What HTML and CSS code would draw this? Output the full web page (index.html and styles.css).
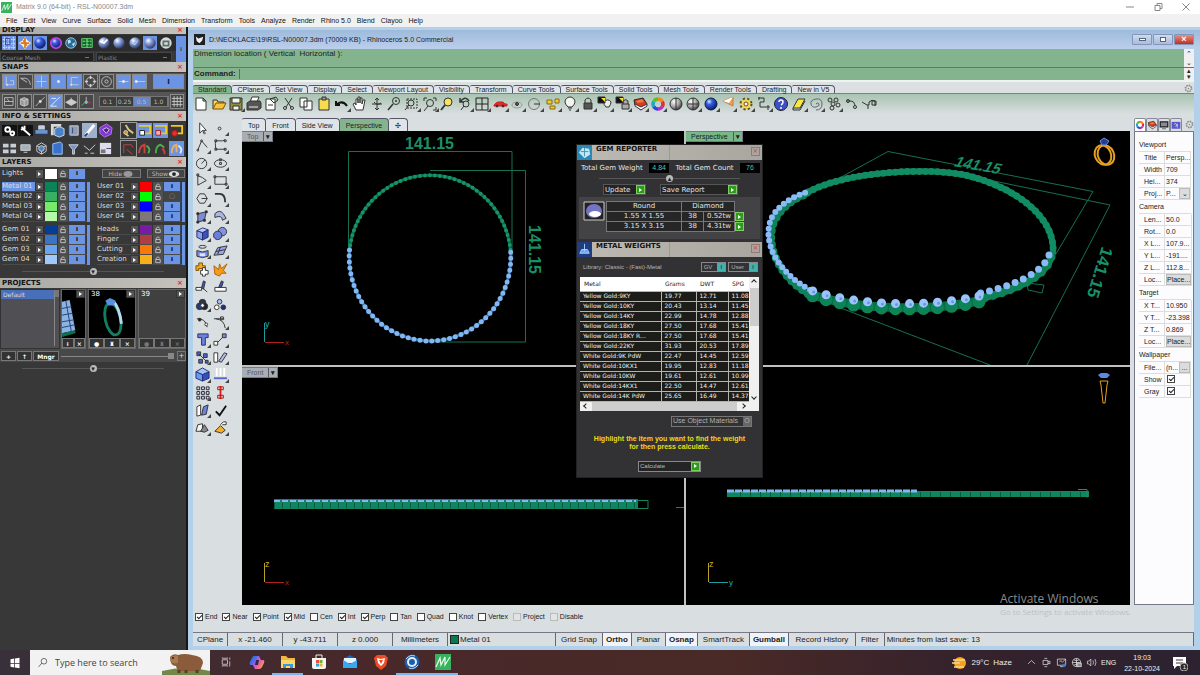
FILE: index.html
```html
<!DOCTYPE html>
<html lang="en">
<head>
<meta charset="utf-8">
<title>Matrix 9.0 (64-bit) - RSL-N00007.3dm</title>
<link rel="stylesheet" href="styles.css">
</head>
<body>
<svg class="defs" aria-hidden="true">
  <defs>
    <radialGradient id="ball" cx=".35" cy=".3" r=".8"><stop offset="0" stop-color="#fff"/><stop offset=".35" stop-color="#8aa0dc"/><stop offset="1" stop-color="#1a2450"/></radialGradient>
    <radialGradient id="bluegl" cx=".35" cy=".3" r=".8"><stop offset="0" stop-color="#dfe8ff"/><stop offset=".3" stop-color="#3a5ee8"/><stop offset="1" stop-color="#05104e"/></radialGradient>
    <radialGradient id="greygl" cx=".35" cy=".3" r=".8"><stop offset="0" stop-color="#fff"/><stop offset=".5" stop-color="#a8a8a8"/><stop offset="1" stop-color="#222"/></radialGradient>
    <linearGradient id="copilot" x2="1" y2=".6"><stop offset="0" stop-color="#2f8df0"/><stop offset=".3" stop-color="#3a6ee8"/><stop offset=".55" stop-color="#b45ce0"/><stop offset=".8" stop-color="#f06a90"/><stop offset="1" stop-color="#f8a050"/></linearGradient>
  </defs>
  <symbol id="lock" viewBox="0 0 10 10"><path d="M3 5V3.500q2-3 4 0M2.500 5h5v3.500h-5z" fill="none" stroke="#c4c4c4"/></symbol>
  <symbol id="gear" viewBox="0 0 16 16"><circle cx="8" cy="8" r="5.500" fill="none" stroke="#888" stroke-width="3" stroke-dasharray="2.300 2"/><circle cx="8" cy="8" r="4.500" fill="#e6e8e8" stroke="#888"/><circle cx="8" cy="8" r="1.500" fill="#888"/></symbol>
  <symbol id="wheel" viewBox="0 0 16 16"><g fill="none" stroke-width="3.500"><path d="M8 3a5 5 0 0 1 4.300 2.500" stroke="#f28a1c"/><path d="M12.300 5.500a5 5 0 0 1 0 5" stroke="#e03030"/><path d="M12.300 10.500A5 5 0 0 1 8 13" stroke="#b030d0"/><path d="M8 13a5 5 0 0 1-4.300-2.500" stroke="#3048e0"/><path d="M3.700 10.500a5 5 0 0 1 0-5" stroke="#20a8c0"/><path d="M3.700 5.500A5 5 0 0 1 8 3" stroke="#58c030"/></g></symbol>
  <symbol id="book" viewBox="0 0 16 16"><path d="M2 4l9-2 4 6-6 6-6-5z" fill="#d83a20" stroke="#222"/><path d="M3 8l6 3 6-3v2l-6 4-6-4z" fill="#fff" stroke="#334"/><path d="M4 5l6-2 2 3-6 1z" fill="#f07838" stroke="none"/></symbol>
  <symbol id="mglyph" viewBox="0 0 16 16"><path d="M0 0h16v16H0z" fill="#38b25c"/><path d="M1 13L5 4l1 7 4-8 0 8 5-8" fill="none" stroke="#e8fff0" stroke-width="1.200"/></symbol>
</svg>

<header class="app-title">
  <svg class="app-logo"><use href="#mglyph"/></svg>
  <span>Matrix 9.0 (64-bit) - RSL-N00007.3dm</span>
  <div class="win-buttons">
    <button aria-label="Minimize"><svg viewBox="0 0 10 10"><path d="M1 5h8"/></svg></button>
    <button aria-label="Restore"><svg viewBox="0 0 10 10"><path d="M2 3.500h5v5H2zM4 3V1.500h5v5H7"/></svg></button>
    <button aria-label="Close"><svg viewBox="0 0 10 10"><path d="M1.500 1.500l7 7M8.500 1.500l-7 7"/></svg></button>
  </div>
</header>
<nav class="menu"><button>File</button><button>Edit</button><button>View</button><button>Curve</button><button>Surface</button><button>Solid</button><button>Mesh</button><button>Dimension</button><button>Transform</button><button>Tools</button><button>Analyze</button><button>Render</button><button>Rhino 5.0</button><button>Blend</button><button>Clayoo</button><button>Help</button></nav>

<div class="main">
<aside class="side">
  <h2 class="bar cut">DISPLAY<button aria-label="Close display">×</button></h2>
  <div class="row disp">
    <button class="on"><svg viewBox="0 0 16 16"><path d="M3 1v14M8 1v14M13 1v14M1 4h14M1 9h14M1 13h14" stroke="#dfe6ff" stroke-dasharray="2 1"/><path d="M4 3h5v7H4z" stroke="#2b3d9c"/></svg></button>
    <button class="on"><svg viewBox="0 0 16 16"><path d="M8 1l3 4 4 3-4 3-3 4-3-4-4-3 4-3z" fill="#fff4d8" stroke="none"/><path d="M8 2v12M3 8h10M6 5l4 6" stroke="#e07818" stroke-width="2"/></svg></button>
    <button class="on"><svg viewBox="0 0 16 16"><circle cx="8" cy="8" r="6.500" fill="url(#bluegl)" stroke="none"/></svg></button>
    <button><svg viewBox="0 0 16 16"><circle cx="8" cy="8" r="6" fill="url(#bluegl)" stroke="#c040e0" stroke-width="2"/></svg></button>
    <button><svg viewBox="0 0 16 16"><circle cx="8" cy="8" r="6" fill="#2a6c9c" stroke="#9cd0e8"/><path d="M4 5l3-1 1 3-3 2zM9 9l4-2-2 5z" fill="#bfe6ee" stroke="none"/></svg></button>
    <button><svg viewBox="0 0 16 16"><path d="M2 3h12v10H2z" fill="#0c6a2c" stroke="#63e070"/><path d="M3 6h10M3 10h10M8 3v10" stroke="#a4f0a0" stroke-dasharray="3 1"/></svg></button>
    <i class="sep"></i>
    <button><svg viewBox="0 0 16 16"><circle cx="8" cy="8" r="6.500" fill="url(#ball)" stroke="none"/><path d="M3 6l5 2 4-4" stroke="#fff" stroke-width="2"/></svg></button>
    <button><svg viewBox="0 0 16 16"><circle cx="8" cy="8" r="6.500" fill="url(#ball)" stroke="none"/></svg></button>
    <button><svg viewBox="0 0 16 16"><circle cx="8" cy="8" r="6.500" fill="url(#ball)" stroke="none"/><path d="M4 8l4 2 3-5" stroke="#cde"/></svg></button>
    <button class="on"><svg viewBox="0 0 16 16"><circle cx="8" cy="8" r="6.500" fill="url(#ball)" stroke="none"/></svg></button>
    <button><svg viewBox="0 0 16 16"><circle cx="8" cy="8" r="6.500" fill="#d4dcdc" stroke="none"/><path d="M5 6h6v5H5z" stroke="#5c7068" stroke-width="2"/></svg></button>
  </div>
  <div class="row combos">
    <select aria-label="Mesh quality"><option>Coarse Mesh</option></select>
    <select aria-label="Material"><option>Plastic</option></select>
  </div>
  <button class="tall" aria-label="Toggle display">ı</button>

  <h2 class="bar">SNAPS<button aria-label="Close snaps">×</button></h2>
  <div class="row tiles">
    <button class="on"><svg viewBox="0 0 16 16"><path d="M4 2v10h9V7H9" /><circle cx="5" cy="12" r="1" fill="#fff"/></svg></button>
    <button><svg viewBox="0 0 16 16"><path d="M2 4h6q5 1 6 8M2 4l8 5"/></svg></button>
    <button class="on"><svg viewBox="0 0 16 16"><path d="M8 1v14M2 8h12"/></svg></button>
    <button class="on"><svg viewBox="0 0 16 16"><circle cx="8" cy="8" r="1.500" fill="#fff"/></svg></button>
    <button class="on"><svg viewBox="0 0 16 16"><path d="M12 3H4v9h9"/><circle cx="4" cy="12" r="1" fill="#fff"/></svg></button>
    <button><svg viewBox="0 0 16 16"><circle cx="8" cy="8" r="5"/><path d="M8 1v4M8 11v4M1 8h4M11 8h4" stroke-width="2"/></svg></button>
    <button><svg viewBox="0 0 16 16"><circle cx="8" cy="8" r="6"/><circle cx="8" cy="8" r="2"/></svg></button>
    <button class="on"><svg viewBox="0 0 16 16"><path d="M2 8h12"/><circle cx="8" cy="8" r="1.500" fill="#fff"/></svg></button>
    <button class="on"><svg viewBox="0 0 16 16"><path d="M3 8h12"/><circle cx="4" cy="8" r="1.500" fill="#fff"/></svg></button>
    <button class="on wide" aria-label="Toggle snaps"><b>I</b></button>
  </div>
  <div class="row tiles second">
    <button><svg viewBox="0 0 16 16"><path d="M2 3h11v10H2zM2 8h11M8 8l-3-4"/></svg></button>
    <button><svg viewBox="0 0 16 16"><path d="M3 5l5-2 5 2v7l-5 2-5-2z" fill="#999"/><path d="M3 5l5 2 5-2M8 7v7"/></svg></button>
    <button><svg viewBox="0 0 16 16"><path d="M2 14L14 2"/><circle cx="8" cy="8" r="1.500" fill="#cfc"/></svg></button>
    <button class="on"><svg viewBox="0 0 16 16"><path d="M2 14L14 2M2 14h8M3 4h6" stroke="#fff"/></svg></button>
    <button><svg viewBox="0 0 16 16"><path d="M1 9l7-4 7 4-7 4z" fill="#ccc"/><path d="M8 3v6"/></svg></button>
    <button><svg viewBox="0 0 16 16"><path d="M8 8V2"/><path d="M8 8l6 2" stroke="#e04040"/><path d="M8 8l-6 5" stroke="#60c060"/><circle cx="8" cy="9" r="1.500" fill="#59f"/></svg></button>
    <div class="steps"><button>0.1</button><button>0.25</button><button class="sel">0.5</button><button>1.0</button></div>
    <button><svg viewBox="0 0 16 16"><path d="M4 1v14M8 1v14M12 1v14M1 4h14M1 8h14M1 12h14" stroke="#d8d8d8"/></svg></button>
  </div>

  <h2 class="bar">INFO &amp; SETTINGS<button aria-label="Close info">×</button></h2>
  <div class="row icons">
    <button><svg viewBox="0 0 16 16"><path d="M0 2h16v12H0z" fill="#111" stroke="none"/><circle cx="6" cy="7" r="2.500" stroke="#fff" stroke-width="2"/><circle cx="11" cy="11" r="2" stroke="#fff" stroke-width="2"/></svg></button>
    <button><svg viewBox="0 0 16 16"><path d="M0 2h16v12H0z" fill="#111" stroke="none"/><path d="M4 4l2 3 7 6M3 7l4-1 0-3" stroke="#fff" stroke-width="2"/></svg></button>
    <button><svg viewBox="0 0 16 16"><path d="M1 7h14v5H1z" fill="#6d94cc" stroke="#234"/><path d="M5 7V3h6v4" fill="#b8d0f0"/></svg></button>
    <button><svg viewBox="0 0 16 16"><path d="M1 1h11v3H4v9H1z" fill="#d8d8d8" stroke="none"/><path d="M5 6l5-2 5 2v7l-5 2-5-2z" fill="#4a80c8" stroke="#cde"/></svg></button>
    <button><svg viewBox="0 0 16 16"><path d="M4 3h9v10H4z" fill="#8d9cb8"/><path d="M3 4v9l3 2M7 5v6" stroke="#334c78"/></svg></button>
    <button><svg viewBox="0 0 16 16"><path d="M0 0h16v16H0z" fill="#9db0cc" stroke="none"/><path d="M4 13l9-11" stroke="#fff" stroke-width="3"/><path d="M3 14l3-3" stroke="#223c7c" stroke-width="2"/></svg></button>
    <button><svg viewBox="0 0 16 16"><path d="M2 5l7-4 6 4-1 7-7 3-5-4z" fill="#8038d0" stroke="#c070f0"/><path d="M5 7l4-2 3 2-3 4z" fill="#4c2090"/></svg></button>
    <i class="sep"></i>
    <button class="frame"><svg viewBox="0 0 16 16"><path d="M5 2l3 5 5 4M3 10l5 4" stroke="#d8c880" stroke-width="2"/><circle cx="5" cy="10" r="2" fill="#d09020"/></svg></button>
    <button class="on"><svg viewBox="0 0 16 16"><path d="M2 3h12v8H9" stroke="#f0c820" stroke-width="2"/><path d="M3 8h5v5H3z" fill="#fff" stroke="#222"/></svg></button>
    <button class="on"><svg viewBox="0 0 16 16"><path d="M2 3h12v8H9" stroke="#f0c820" stroke-width="2"/><path d="M3 8h5v5H3z" fill="#f8b0b0" stroke="#a22"/></svg></button>
    <button><svg viewBox="0 0 16 16"><path d="M2 3h12v8H9" stroke="#f0c820" stroke-width="2"/><circle cx="6" cy="11" r="3" fill="#e03030" stroke="#c01010"/></svg></button>
  </div>
  <div class="row icons last">
    <button><svg viewBox="0 0 16 16"><path d="M1 3h6v4H1zM9 3h6v4H9zM1 9h6v4H1zM9 9h6v4H9z" fill="#c8ced6" stroke="none"/></svg></button>
    <button><svg viewBox="0 0 16 16"><path d="M3 4h10v6H3z" fill="#a4b0bc"/><path d="M6 12h4"/></svg></button>
    <button><svg viewBox="0 0 16 16"><path d="M3 5l5-3 5 3v6l-5 3-5-3zM3 5l5 3 5-3M8 8v6"/><circle cx="8" cy="8" r="3" fill="#48c"/></svg></button>
    <button><svg viewBox="0 0 16 16"><path d="M3 3l8-2 2 2v11H3z" fill="#3c70d0" stroke="#9cf"/></svg></button>
    <button><svg viewBox="0 0 16 16"><path d="M3 4h10l-4 5v5H7V9z" fill="#6c94dc"/></svg></button>
    <button><svg viewBox="0 0 16 16"><path d="M2 5l6 5 6-6M3 13h3M9 13h4"/></svg></button>
    <button><svg viewBox="0 0 16 16"><path d="M2 2h12v12H2z" fill="#dde" stroke="none"/><path d="M3 9h5v4H3z" fill="#777" stroke="none"/><path d="M9 8h5" stroke="#446"/></svg></button>
    <i class="sep"></i>
    <button class="frame"><svg viewBox="0 0 16 16"><path d="M3 13V4h8l2 3M6 9l6 5" stroke="#c04848"/></svg></button>
    <button><svg viewBox="0 0 16 16"><path d="M2 13q1-8 6-9v9" stroke="#d04040" stroke-width="2"/><path d="M10 5q5 3 2 8" stroke="#4cb04c" stroke-width="2"/></svg></button>
    <button><svg viewBox="0 0 16 16"><path d="M3 13q0-8 5-9l4 3" stroke="#4cb04c" stroke-width="2"/><path d="M10 8q3 3 2 6" stroke="#d04040" stroke-width="2"/></svg></button>
    <button class="on"><svg viewBox="0 0 16 16"><path d="M3 13q0-8 5-9v8" stroke="#e8b060" stroke-width="2"/><path d="M10 5q5 3 2 8" stroke="#dfe8ff" stroke-width="2"/></svg></button>
  </div>

  <h2 class="bar">LAYERS<button aria-label="Close layers">×</button></h2>
  <div class="layers">
    <div class="layer"><span>Lights</span><button class="ar"></button><i class="sw white"></i><svg><use href="#lock"/></svg><button class="tg">ı</button><i></i></div>
    <div class="vis"><button>Hide <svg viewBox="0 0 16 10"><ellipse cx="8" cy="5" rx="6" ry="4" fill="#999"/></svg></button><button>Show <svg viewBox="0 0 16 10"><ellipse cx="8" cy="5" rx="7" ry="4" fill="#ddd"/><circle cx="8" cy="5" r="2.500" fill="#222"/></svg></button></div>
    <div class="group">
      <div class="layer"><span class="cur">Metal 01</span><button class="ar"></button><i class="sw m1"></i><svg><use href="#lock"/></svg><button class="tg">ı</button></div>
      <div class="layer"><span>Metal 02</span><button class="ar"></button><i class="sw m2"></i><svg><use href="#lock"/></svg><button class="tg">ı</button></div>
      <div class="layer"><span>Metal 03</span><button class="ar"></button><i class="sw m3"></i><svg><use href="#lock"/></svg><button class="tg">ı</button></div>
      <div class="layer"><span>Metal 04</span><button class="ar"></button><i class="sw m4"></i><svg><use href="#lock"/></svg><button class="tg">ı</button></div>
    </div>
    <div class="group">
      <div class="layer"><span>User 01</span><button class="ar"></button><i class="sw u1"></i><svg><use href="#lock"/></svg><button class="tg">ı</button></div>
      <div class="layer"><span>User 02</span><button class="ar"></button><i class="sw u2"></i><svg><use href="#lock"/></svg><button class="tg off">○</button></div>
      <div class="layer"><span>User 03</span><button class="ar"></button><i class="sw u3"></i><svg><use href="#lock"/></svg><button class="tg">ı</button></div>
      <div class="layer"><span>User 04</span><button class="ar"></button><i class="sw u4"></i><svg><use href="#lock"/></svg><button class="tg">ı</button></div>
    </div>
    <div class="group">
      <div class="layer"><span>Gem 01</span><button class="ar"></button><i class="sw g1"></i><svg><use href="#lock"/></svg><button class="tg">ı</button></div>
      <div class="layer"><span>Gem 02</span><button class="ar"></button><i class="sw g2"></i><svg><use href="#lock"/></svg><button class="tg">ı</button></div>
      <div class="layer"><span>Gem 03</span><button class="ar"></button><i class="sw g3"></i><svg><use href="#lock"/></svg><button class="tg">ı</button></div>
      <div class="layer"><span>Gem 04</span><button class="ar"></button><i class="sw g4"></i><svg><use href="#lock"/></svg><button class="tg">ı</button></div>
    </div>
    <div class="group">
      <div class="layer"><span>Heads</span><button class="ar"></button><i class="sw h1"></i><svg><use href="#lock"/></svg><button class="tg">ı</button></div>
      <div class="layer"><span>Finger</span><button class="ar"></button><i class="sw h2"></i><svg><use href="#lock"/></svg><button class="tg">ı</button></div>
      <div class="layer"><span>Cutting</span><button class="ar"></button><i class="sw h3"></i><svg><use href="#lock"/></svg><button class="tg">ı</button></div>
      <div class="layer"><span>Creation</span><button class="ar"></button><i class="sw h4"></i><svg><use href="#lock"/></svg><button class="tg">ı</button></div>
    </div>
  </div>
  <div class="pull"><button aria-label="Expand layers">▾</button></div>

  <h2 class="bar">PROJECTS<button aria-label="Close projects">×</button></h2>
  <div class="projects">
    <div class="plist"><div class="pick">Default</div><div class="vslide"></div></div>
    <div class="thumbs">
      <figure class="half"><figcaption><button class="ar"></button></figcaption><svg viewBox="0 0 24 42"><path d="M0 4l8-2 6 32-14 3z" fill="#8cb4e0"/><path d="M0 11l10-2M0 18l11-2M0 25l12-2M0 31l14-3M4 3l6 33" stroke="#26407c"/><path d="M0 37l14-3v3L0 41z" fill="#0c7050"/></svg><div class="acts"><button>⁞</button><button>×</button></div></figure>
      <figure><figcaption>38<button class="ar"></button></figcaption><svg viewBox="0 0 46 42"><ellipse cx="24" cy="22" rx="8" ry="17" transform="rotate(-12 24 22)" fill="none" stroke="#128060" stroke-width="3"/><path d="M24 3q7 7 9 24" fill="none" stroke="#b8d8f4" stroke-width="3"/><path d="M16 3l5-3 6 3-2 5h-6z" fill="#5890e0"/></svg><div class="acts"><button>●</button><button>♜</button><button>×</button></div></figure>
      <figure class="empty"><figcaption>39<button class="ar"></button></figcaption><svg viewBox="0 0 46 42"></svg><div class="acts"><button>●</button><button>♜</button><button>×</button></div></figure>
    </div>
    <div class="pbtns"><button>+</button><button>↑</button><button class="grow">Mngr</button></div>
    <div class="hslide"><i></i><b></b><button>+</button></div>
  </div>
  <div class="pull"><button aria-label="Expand projects">▾</button></div>
</aside>

<section class="rhino">
  <header class="r-title">
    <svg viewBox="0 0 12 12"><path d="M0 0h12v12H0z" fill="#1c2024"/><path d="M2 3l3 2 5-2-1 4-3 3-3-2z" fill="#eee"/></svg>
    <span>D:\NECKLACE\19\RSL-N00007.3dm (70009 KB) - Rhinoceros 5.0 Commercial</span>
    <div class="r-win"><button aria-label="Minimize"><i></i></button><button aria-label="Restore"><i class="sq"></i></button><button class="x" aria-label="Close">×</button></div>
  </header>
  <div class="cmd">
    <div class="hist"><span>Dimension location ( Vertical&nbsp; Horizontal ):</span><div class="ud"><button>⌃</button><button>⌄</button></div></div>
    <div class="prompt"><label for="cmd">Command:</label><input id="cmd" type="text"><div class="ud"><button>▴</button><button>▾</button></div></div>
  </div>
  <div class="tabs"><button class="act">Standard</button><button>CPlanes</button><button>Set View</button><button>Display</button><button>Select</button><button>Viewport Layout</button><button>Visibility</button><button>Transform</button><button>Curve Tools</button><button>Surface Tools</button><button>Solid Tools</button><button>Mesh Tools</button><button>Render Tools</button><button>Drafting</button><button>New in V5</button><svg class="cog"><use href="#gear"/></svg></div>
  <div class="toolbar"><div class="tools">
    <button><svg viewBox="0 0 16 16"><path d="M3 2h7l3 3v9H3zM10 2v3h3" fill="#fff"/></svg></button>
    <button><svg viewBox="0 0 16 16"><path d="M2 13V4h4l1 2h6v2" fill="#f8d860"/><path d="M2 13l3-6h10l-3 6z" fill="#fbc438" stroke="#7a5010"/></svg></button>
    <button class="dd"><svg viewBox="0 0 16 16"><path d="M2 2h12v12H2z" fill="#908c40"/><path d="M4 2h8v5H4zM5 10h6v4H5z" fill="#f4f4e8"/></svg></button>
    <button><svg viewBox="0 0 16 16"><path d="M4 6l2-5h7l-2 5z" fill="#fff"/><path d="M1 7l3-2h10l1 2v5l-3 2H1z" fill="#555"/><path d="M3 11h9" stroke="#eee"/></svg></button>
    <button><svg viewBox="0 0 16 16"><path d="M3 3h9v11H3z" fill="#fff"/><path d="M7 3l6-2 2 3-4 3zM5 9h5"/></svg></button>
    <button><svg viewBox="0 0 16 16"><path d="M4 2l6 9M11 2l-6 9"/><circle cx="4" cy="12" r="1.500"/><circle cx="11" cy="12" r="1.500"/></svg></button>
    <button><svg viewBox="0 0 16 16"><path d="M2 2h7v9H2zM6 5h8v9H6z" fill="#fff"/></svg></button>
    <button><svg viewBox="0 0 16 16"><path d="M3 3h10v11H3z" fill="#f8dc50"/><path d="M6 1h4v3H6z" fill="#999"/></svg></button>
    <button class="dd"><svg viewBox="0 0 16 16"><path d="M3 8q6-4 10 2M2 5v4h4" stroke-width="2" stroke="#111"/></svg></button>
    <button><svg viewBox="0 0 16 16"><path d="M5 14L2 8l2-1 1 2V3h2v4V1h2v6V2h2v6l1-4h2l-2 10z" fill="#fff"/></svg></button>
    <button><svg viewBox="0 0 16 16"><path d="M8 2v12M3 8h10M6 4l2-2 2 2M6 12l2 2 2-2M5 6q3 4 7 1"/></svg></button>
    <button><svg viewBox="0 0 16 16"><circle cx="10" cy="5" r="3.500"/><path d="M7 8l-5 6M9 5h2" stroke-width="1.500"/></svg></button>
    <button class="dd"><svg viewBox="0 0 16 16"><path d="M3 3h10v9H3z" stroke-dasharray="2 1"/><circle cx="7" cy="7" r="3"/><path d="M5 9l-4 5"/></svg></button>
    <button class="dd"><svg viewBox="0 0 16 16"><circle cx="8" cy="7" r="3.500"/><path d="M6 10l-4 5M2 5V2h3M11 2h3v3M14 11v3h-3"/></svg></button>
    <button><svg viewBox="0 0 16 16"><circle cx="9" cy="6" r="4" fill="#f8e060"/><path d="M6 9l-4 5" stroke-width="2"/></svg></button>
    <button class="dd"><svg viewBox="0 0 16 16"><path d="M3 6q5-7 9-1M3 2v4h4" stroke-width="1.500"/><circle cx="9" cy="8" r="3"/><path d="M7 10l-3 4"/></svg></button>
    <button class="dd"><svg viewBox="0 0 16 16"><path d="M2 2h12v12H2zM8 2v12M2 8h12" stroke="#222"/></svg></button>
    <button class="dd"><svg viewBox="0 0 16 16"><path d="M2 9l2-2 2-1h5l2 2h2v2H2z" fill="#e02c2c" stroke="#c22"/><circle cx="5" cy="10" r="1" fill="#222"/><circle cx="11" cy="10" r="1" fill="#222"/></svg></button>
    <button class="dd"><svg viewBox="0 0 16 16"><ellipse cx="8" cy="9" rx="5" ry="3" stroke="#999"/><circle cx="8" cy="8" r="1.500" fill="#555"/></svg></button>
    <button class="dd"><svg viewBox="0 0 16 16"><circle cx="7" cy="8" r="5.500" stroke="#777"/><path d="M7 8h6"/></svg></button>
    <button class="dd"><svg viewBox="0 0 16 16"><path d="M2 4h5v4H2zM10 3h4v4h-4zM5 10h5v3H5z" fill="#f4cc28" stroke="#8a6a10"/></svg></button>
    <button class="dd"><svg viewBox="0 0 16 16"><path d="M6 11q-3-3-3-5a5 5 0 0 1 10 0q0 2-3 5z" fill="#f2f4f2"/><path d="M6 12h4M7 14h2"/></svg></button>
    <button class="dd"><svg viewBox="0 0 16 16"><path d="M5 7V4q3-4 6 0v3"/><path d="M4 7h8v6H4z" fill="#555"/></svg></button>
    <button class="dd"><svg viewBox="0 0 16 16"><path d="M9 11q-3-3-2-5a4 4 0 0 1 7 0q0 2-2 5z" fill="#eee"/><path d="M1 1h7v6H1z" fill="#111"/><path d="M4 2h4v4z" fill="#f8e040" stroke="none"/></svg></button>
    <button class="dd"><svg viewBox="0 0 16 16"><path d="M8 8V5q3-3 5 0v3M7 8h7v5H7z" fill="#aaa"/><path d="M1 1h7v6H1z" fill="#111"/><path d="M4 2h4v4z" fill="#f8e040" stroke="none"/></svg></button>
    <button class="dd"><svg><use href="#book"/></svg></button>
    <button class="dd"><svg><use href="#wheel"/></svg></button>
    <button><svg viewBox="0 0 16 16"><circle cx="8" cy="8" r="6" fill="url(#greygl)"/><path d="M8 2v12"/></svg></button>
    <button class="dd"><svg viewBox="0 0 16 16"><circle cx="8" cy="8" r="6" fill="url(#greygl)"/><path d="M3 8h10M8 2v12"/></svg></button>
    <button class="dd"><svg viewBox="0 0 16 16"><circle cx="8" cy="8" r="6" fill="url(#bluegl)" stroke="#024"/></svg></button>
    <button class="dd"><svg viewBox="0 0 16 16"><path d="M3 5l10-4 0 9z" fill="#f4a040" stroke="#c08050"/><path d="M3 5l10-4-4 6z" fill="#fff" stroke="none"/></svg></button>
    <button class="dd"><svg viewBox="0 0 16 16"><circle cx="8" cy="8" r="5" fill="#f4d858" stroke="#6a5010" stroke-width="3" stroke-dasharray="2 2"/><circle cx="8" cy="8" r="4.500" fill="#f4d858" stroke="none"/><circle cx="8" cy="8" r="2" fill="#fff" stroke="#6a5010"/></svg></button>
    <button class="dd"><svg viewBox="0 0 16 16"><path d="M2 2h6v4H4v5h10M3 1v3M12 9v5"/></svg></button>
    <button><svg viewBox="0 0 16 16"><circle cx="8" cy="8" r="6.500" fill="#3c50c8" stroke="#223"/><path d="M6 6q0-2 2-2t2 2-2 3M8 11v2" stroke="#fff" stroke-width="1.500"/></svg></button>
    <button class="dd"><svg viewBox="0 0 16 16"><path d="M2 12l5-9h7l-5 9z" fill="#f8e840"/><path d="M2 12v2h7l5-9"/></svg></button>
    <button class="dd"><svg viewBox="0 0 16 16"><path d="M8 8q2-2 3 0t-3 3-5-3 5-5 6 5-6 6" stroke="#667"/></svg></button>
    <button class="dd"><svg viewBox="0 0 16 16"><circle cx="4" cy="4" r="2"/><circle cx="10" cy="4" r="2"/><circle cx="7" cy="8" r="2"/><circle cx="12" cy="9" r="2"/><circle cx="6" cy="12" r="2"/></svg></button>
    <button><svg viewBox="0 0 16 16"><path d="M4 5h4q3 0 4 4"/><circle cx="5" cy="5" r="1.500"/><circle cx="12" cy="11" r="1.500"/></svg></button>
    <button><svg viewBox="0 0 16 16"><path d="M1 6l5 3h2V6q3-3 6-1v5M7 9v4"/><path d="M11 5h4v4h-4z"/></svg></button>
  </div></div>

  <div class="work">
    <div class="palette">
      <button><svg viewBox="0 0 16 16"><path d="M5 2v11l3-3 2 4 1-1-2-3h3z" fill="#fff"/></svg></button>
      <button class="dd"><svg viewBox="0 0 16 16"><circle cx="7" cy="8" r="1.500"/></svg></button>
      <button class="dd"><svg viewBox="0 0 16 16"><path d="M3 13L7 3l6 7"/><circle cx="3" cy="13" r="1"/><circle cx="7" cy="3" r="1"/></svg></button>
      <button class="dd"><svg viewBox="0 0 16 16"><path d="M3 3h7l3-1M3 12q-1-8 0-9M3 12h10"/><path d="M2 2h2v2H2zM12 2h2v2h-2zM2 11h2v2H2zM12 11h2v2h-2z"/></svg></button>
      <button class="dd"><svg viewBox="0 0 16 16"><circle cx="7" cy="8" r="5.500"/><path d="M7 8l4-4"/></svg></button>
      <button class="dd"><svg viewBox="0 0 16 16"><ellipse cx="8" cy="8" rx="6.500" ry="4"/><path d="M7 7h2v2H7zM7 3h2v2H7z"/></svg></button>
      <button class="dd"><svg viewBox="0 0 16 16"><path d="M3 2v11l9-5q-4-4-9-5"/><path d="M2 1h2v2H2z"/></svg></button>
      <button class="dd"><svg viewBox="0 0 16 16"><path d="M2 4h12v8H2z"/><path d="M1 3h2v2H1zM13 11h2v2h-2z"/></svg></button>
      <button class="dd"><svg viewBox="0 0 16 16"><path d="M2 8l3-5h5l3 5-3 5H5z"/><path d="M7 8h6"/></svg></button>
      <button class="dd"><svg viewBox="0 0 16 16"><path d="M2 3h5q6 0 6 9" stroke-width="2"/></svg></button>
      <button class="dd"><svg viewBox="0 0 16 16"><path d="M3 5l9-2-2 9-7 2z" fill="#7b8cd8"/><path d="M2 4h2v2H2zM11 2h2v2h-2zM9 11h2v2H9zM2 13h2v2H2z" fill="#223"/></svg></button>
      <button class="dd"><svg viewBox="0 0 16 16"><path d="M2 5q5-5 9 0l3 5-4 2q0-6-8-3z" fill="#a9b4e8"/></svg></button>
      <button class="dd"><svg viewBox="0 0 16 16"><path d="M2 5l6 2v8l-6-3z" fill="#8ca0f0" stroke="#223070"/><path d="M8 7l6-3v8l-6 3z" fill="#3c50b8" stroke="#223070"/><path d="M2 5l6-3 6 2-6 3z" fill="#c0caf8" stroke="#223070"/></svg></button>
      <button class="dd"><svg viewBox="0 0 16 16"><circle cx="10" cy="6" r="4.500" fill="#8493e4"/><circle cx="5" cy="10" r="4.500" fill="#6a7cdc"/></svg></button>
      <button class="dd"><svg viewBox="0 0 16 16"><ellipse cx="8" cy="3" rx="4" ry="1.500"/><path d="M2 7q6 3 12 0v6q-6 3-12 0z" fill="#7888e0"/><path d="M5 10h6v3H5z" fill="#dfe4ff" stroke="none"/></svg></button>
      <button class="dd"><svg viewBox="0 0 16 16"><path d="M1 12l4-8 10-2-4 9z" fill="#98a5e8"/><path d="M3 8l10-2M8 3l-3 8"/></svg></button>
      <button><svg viewBox="0 0 16 16"><path d="M1 4h3V1h4v3h3v5H8v-2H4v2H1z" fill="#f4a81c" stroke="#7a5008"/><path d="M6 9h2V6h3v3h3v4h-3v2H8v-2H6z" fill="#fff"/></svg></button>
      <button><svg viewBox="0 0 16 16"><path d="M1 4l5 4 1-6 2 5 6-5-4 7 3 3-5 0-2 3-5-2z" fill="#f49c18" stroke="#b06010"/></svg></button>
      <button><svg viewBox="0 0 16 16"><path d="M1 9h6v3H1zM8 9l5 5" fill="#fff"/><path d="M7 9l2-7 2 1-2 8z" fill="#3c54c0"/></svg></button>
      <button><svg viewBox="0 0 16 16"><path d="M2 9h12v4H2z" fill="#fff"/><path d="M6 9l3-7 2 1-2 6z" fill="#3c54c0"/></svg></button>
      <button class="dd"><svg viewBox="0 0 16 16"><circle cx="8" cy="6" r="3.500" fill="#334"/><circle cx="5" cy="10" r="3.500" fill="#223c7c"/><circle cx="10" cy="10" r="3.500" fill="#223"/><circle cx="8" cy="9" r="2" fill="#fff"/></svg></button>
      <button><svg viewBox="0 0 16 16"><circle cx="7" cy="5" r="2.500" fill="#aab8f0"/><circle cx="4" cy="11" r="2.500" fill="#fff"/><circle cx="11" cy="11" r="2.500" fill="#203080"/></svg></button>
      <button><svg viewBox="0 0 16 16"><path d="M2 4q9-1 11 9"/><circle cx="5" cy="5" r="1.500" fill="#222"/><circle cx="12" cy="10" r="1.500" fill="#fff"/></svg></button>
      <button class="dd"><svg viewBox="0 0 16 16"><path d="M1 4h11M3 4q9 1 10 10"/><path d="M8 2h3v3H8z"/></svg></button>
      <button class="dd"><svg viewBox="0 0 16 16"><path d="M3 2h11v4h-3v8H7V6H3z" fill="#6c80dc" stroke="#223070"/></svg></button>
      <button class="dd"><svg viewBox="0 0 16 16"><path d="M3 13l9-9"/><path d="M1 10h4v4H1z" fill="#fff"/><path d="M10 2h4v4h-4z" fill="#7888dc"/></svg></button>
      <button class="dd"><svg viewBox="0 0 16 16"><path d="M2 2h4v4H2zM9 4h4v4H9zM4 10h4v4H4zM11 11h3v3h-3z" fill="#4c64c8"/><path d="M4 4l8 8"/></svg></button>
      <button class="dd"><svg viewBox="0 0 16 16"><path d="M1 3h4v10H1z" fill="#fff"/><path d="M6 12l6-9 3 1-6 9z" fill="#b0baf0"/></svg></button>
      <button class="dd"><svg viewBox="0 0 16 16"><path d="M1 5l7 3v7l-7-3z" fill="#6c98f0" stroke="#203080"/><path d="M8 8l7-3v7l-7 3z" fill="#3450b0" stroke="#203080"/><path d="M1 5l7-4 7 4-7 3z" fill="#a4c4f8" stroke="#203080"/></svg></button>
      <button class="dd"><svg viewBox="0 0 16 16"><path d="M4 1v9M8 1v9M12 1v9" stroke="#fff" stroke-width="2"/><path d="M1 12h14" stroke="#5468d0" stroke-width="2"/></svg></button>
      <button class="dd"><svg viewBox="0 0 16 16"><path d="M2 2h3v3H2zM7 2h3v3H7zM12 2h3v3h-3zM2 7h3v3H2zM7 7h3v3H7zM12 7h3v3h-3zM2 12h3v3H2zM7 12h3v3H7zM12 12h3v3h-3z" stroke="#223"/></svg></button>
      <button><svg viewBox="0 0 16 16"><path d="M8 1v14" stroke="#e02020" stroke-width="2"/><path d="M5 2h6v3H5zM5 11h6v3H5z" stroke="#a11"/></svg></button>
      <button class="dd"><svg viewBox="0 0 16 16"><path d="M2 4l4-2v11l-4 1z" fill="#fff"/><path d="M7 13l2-9 5-2-2 10z" fill="#6c80e0"/></svg></button>
      <button><svg viewBox="0 0 16 16"><path d="M3 9l4 4 7-10" stroke="#111" stroke-width="2"/></svg></button>
      <button class="dd"><svg viewBox="0 0 16 16"><path d="M1 12l2-7 5-1v8z" fill="#f4f4f4"/><path d="M6 12l4-7 4 6-4 2z" fill="#888"/></svg></button>
      <button class="dd"><svg viewBox="0 0 16 16"><path d="M2 12l6-6 5 5-4 3z" fill="#f4b028"/><path d="M8 5l3-3h3v3h-4" fill="#fff"/></svg></button>
    </div>

    <div class="center">
      <div class="vtabs"><button>Top</button><button>Front</button><button>Side View</button><button class="act">Perspective</button><button>✣</button></div>
      <div class="views">
        <div class="view">
          <svg viewBox="242 131 442 234">
            <g class="dim"><path d="M348.500 258V151.500H512V258M430 170.500h95.500V342H430"/></g>
            <path d="M349.500 250A81 84 0 0 1 510.500 250" fill="none" stroke="#0c6c4c" stroke-width="3"/>
            <path d="M349.500 250A81 84 0 0 1 510.500 250" class="bead" stroke="#16936a" stroke-width="4" stroke-dasharray="0 5"/>
            <path d="M349.500 250A81 84 0 0 0 430 341A81 84 0 0 0 510.500 250" fill="none" stroke="#2c6c94" stroke-width="3"/>
            <path d="M349.500 250A81 84 0 0 0 430 341A81 84 0 0 0 510.500 250" class="bead" stroke="#82b6f4" stroke-width="5" stroke-dasharray="0 6"/>
            <text class="dimt" x="405" y="149" font-size="16">141.15</text>
            <text class="dimt" transform="translate(529 225) rotate(90)" font-size="16">141.15</text>
            <path d="M264.500 323v19" stroke="#1c9aa0"/><path d="M265 342.500h19" stroke="#b02020"/>
            <text x="265" y="327" font-size="9" fill="#1cb4b8">y</text><text x="285" y="345" font-size="8" fill="#c02020">x</text>
          </svg>
          <button class="vlabel">Top<b>▾</b></button>
        </div>
        <div class="view">
          <svg viewBox="686 131 444 234">
            <g class="dim"><path d="M834 181L888 151.500l205 40-38 64M960 174l150 31-83 160M838 307l152 58M1027 283l17 2-2 8-14-3z"/></g>
            <path d="M808 192C850 170 930 168 965 175C1012 186 1056 215 1053 254" fill="none" stroke="#0f8660" stroke-width="6"/>
            <path d="M808 192C850 170 930 168 965 175C1012 186 1056 215 1053 254" class="bead" stroke="#128c62" stroke-width="7" stroke-dasharray="0 6"/>
            <path d="M1051 257C1046 278 1010 292 976 300" fill="none" stroke="#0e8258" stroke-width="7"/>
            <path d="M1051 257C1046 278 1010 292 976 300" class="bead" stroke="#0e8258" stroke-width="9" stroke-dasharray="0 9"/>
            <path d="M1049 255C1043 274 1010 287 976 294" class="bead" stroke="#8abaf8" stroke-width="7" stroke-dasharray="0 9"/>
            <path d="M808 294C778 276 764 243 775 220C783 205 796 198 809 193" fill="none" stroke="#0e8258" stroke-width="6"/>
            <path d="M808 294C778 276 764 243 775 220C783 205 796 198 809 193" class="bead" stroke="#0e8258" stroke-width="8" stroke-dasharray="0 7"/>
            <path d="M810 290C776 271 761 240 772 217C780 203 795 196 807 192" class="bead" stroke="#8abaf8" stroke-width="6" stroke-dasharray="0 6"/>
            <path d="M979 301C930 311 860 311 810 294" fill="none" stroke="#0a6c48" stroke-width="9"/>
            <path d="M979 302C930 312 860 312 810 295" class="bead" stroke="#0c8456" stroke-width="13" stroke-dasharray="0 14"/>
            <path d="M979 296C930 307 860 307 810 290" class="bead" stroke="#9cc4fc" stroke-width="9" stroke-dasharray="0 14"/>
            <path d="M980 297C931 308 861 308 811 291" class="bead" stroke="#6c98e0" stroke-width="3" stroke-dasharray="0 14"/>
            <text class="dimt" transform="translate(953 166) rotate(10) skewX(-20)" font-size="15">141.15</text>
            <text class="dimt" transform="translate(1102 246) rotate(107)" font-size="17">141.15</text>
            <g fill="none" stroke="#e8a020" stroke-width="2"><ellipse cx="1103" cy="155" rx="8" ry="10" transform="rotate(-25 1103 155)"/><ellipse cx="1106" cy="155" rx="8" ry="10" transform="rotate(-25 1106 155)"/></g>
            <path d="M1100 141l4-3 5 3-3 4h-4z" fill="#24408c" stroke="#6c90e8"/>
          </svg>
          <button class="vlabel green">Perspective<b>▾</b></button>
        </div>
        <div class="view">
          <svg viewBox="242 367 442 238">
            <path d="M274 499h364v10H274z" fill="#0f8660"/><path d="M274 501h362" stroke="#82b6f4" stroke-width="2" stroke-dasharray="6 2"/><path d="M274 505.500h364" stroke="#0a5a40" stroke-dasharray="1 7" stroke-width="6"/>
            <path d="M638 500.500h10v8h-10M676 507.500h8" fill="none" stroke="#0f8660"/>
            <path d="M264.500 563v19" stroke="#b8a020"/><path d="M265 582.500h19" stroke="#b02020"/>
            <text x="265" y="567" font-size="9" fill="#d0b020">z</text><text x="285" y="585" font-size="8" fill="#c02020">x</text>
          </svg>
          <button class="vlabel">Front<b>▾</b></button>
        </div>
        <div class="view">
          <svg viewBox="686 367 444 238">
            <path d="M727 491h362v6H727z" fill="#0f8660"/><path d="M727 491h190" stroke="#82b6f4" stroke-width="3" stroke-dasharray="7 1"/><path d="M740 494.500h345" stroke="#0a5a40" stroke-dasharray="1 9" stroke-width="5"/><path d="M1078 489.500h9v8" fill="none" stroke="#16936a"/>
            <path d="M708.500 563v19" stroke="#b8a020"/><path d="M709 582.500h19" stroke="#1c9aa0"/>
            <text x="709" y="567" font-size="9" fill="#d0b020">z</text><text x="729" y="585" font-size="8" fill="#1cb4b8">y</text>
            <path d="M1100 381h8l-1 4-2 18h-2l-2-18z" fill="none" stroke="#e8a020"/><path d="M1098 375l3-2h6l3 2-3 3h-6z" fill="#5c88e0"/>
          </svg>
        </div>

        <section class="dialog">
          <header><svg viewBox="0 0 16 16"><path d="M0 0h16v16H0z" fill="#2a88b8"/><path d="M2 8l4-5 7 1 1 6-6 4z" fill="#bfe8f4"/><path d="M4 7h8M8 3v9" stroke="#4a90b0"/></svg><h3>GEM REPORTER</h3><button aria-label="Close gem reporter">×</button></header>
          <div class="totals"><span>Total Gem Weight</span><output>4.84</output><span>Total Gem Count</span><output>76</output></div>
          <div class="pull inner"><button aria-label="Collapse">▴</button></div>
          <div class="gbtns"><button class="gb">Update<i></i></button><button class="gb long">Save Report<i></i></button></div>
          <div class="gems">
            <svg viewBox="0 0 22 20"><path d="M1 1h20v18H1z" fill="#222" stroke="#ccc"/><ellipse cx="11" cy="10" rx="8" ry="7" fill="#7474c4"/><ellipse cx="12" cy="13" rx="6" ry="3" fill="#fff"/></svg>
            <table><thead><tr><th>Round</th><th colspan="2">Diamond</th><th class="nb"></th></tr></thead><tbody><tr><td>1.55 X 1.55</td><td>38</td><td>0.52tw</td><td class="nb"><button class="go" aria-label="Show 1.55"></button></td></tr><tr><td>3.15 X 3.15</td><td>38</td><td>4.31tw</td><td class="nb"><button class="go" aria-label="Show 3.15"></button></td></tr></tbody></table>
          </div>
          <header><svg viewBox="0 0 16 16"><path d="M0 0h16v16H0z" fill="#223c80"/><path d="M8 2v8M3 12h10l-2-4H5z" fill="#70a8f0" stroke="#a8d0ff"/></svg><h3>METAL WEIGHTS</h3><button aria-label="Close metal weights">×</button></header>
          <div class="lib"><span>Library: Classic - (Fast)-Metal</span><button>GV<i>I</i></button><button>User<i>I</i></button></div>
          <div class="metals">
            <div class="clip"><table>
              <colgroup><col class="c1"><col class="c2"><col class="c3"><col class="c4"></colgroup>
              <thead><tr><th>Metal</th><th>Grams</th><th>DWT</th><th>SPG</th></tr></thead>
              <tbody>
              <tr><td>Yellow Gold:9KY</td><td>19.77</td><td>12.71</td><td>11.08</td></tr>
              <tr><td>Yellow Gold:10KY</td><td>20.43</td><td>13.14</td><td>11.45</td></tr>
              <tr><td>Yellow Gold:14KY</td><td>22.99</td><td>14.78</td><td>12.88</td></tr>
              <tr><td>Yellow Gold:18KY</td><td>27.50</td><td>17.68</td><td>15.41</td></tr>
              <tr><td>Yellow Gold:18KY R...</td><td>27.50</td><td>17.68</td><td>15.41</td></tr>
              <tr><td>Yellow Gold:22KY</td><td>31.93</td><td>20.53</td><td>17.89</td></tr>
              <tr><td>White Gold:9K PdW</td><td>22.47</td><td>14.45</td><td>12.59</td></tr>
              <tr><td>White Gold:10KX1</td><td>19.95</td><td>12.83</td><td>11.18</td></tr>
              <tr><td>White Gold:10KW</td><td>19.61</td><td>12.61</td><td>10.99</td></tr>
              <tr><td>White Gold:14KX1</td><td>22.50</td><td>14.47</td><td>12.61</td></tr>
              <tr><td>White Gold:14K PdW</td><td>25.65</td><td>16.49</td><td>14.37</td></tr>
              </tbody></table></div>
            <div class="vs"><b></b><i></i><b class="dn"></b></div>
            <div class="hs"><b class="lt"></b><i></i><b class="rt"></b></div>
          </div>
          <button class="uom">Use Object Materials<i>O</i></button>
          <p>Highlight the item you want to find the weight<br>for then press calculate.</p>
          <button class="gb calc">Calculate<i></i></button>
        </section>
      </div>
    </div>

    <aside class="props">
      <div class="ptabs"><button class="act"><svg><use href="#wheel"/></svg></button><button><svg><use href="#book"/></svg></button><button><svg viewBox="0 0 16 16"><path d="M2 3h12v8H2z" fill="#889" stroke="#222" stroke-width="2"/><path d="M5 14h6" stroke="#222"/></svg></button><button><svg viewBox="0 0 16 16"><path d="M1 3h14v11H1z" fill="#5858c8"/><path d="M5 7q3-3 4 0t-2 3M10 6v6" stroke="#fff" fill="none"/></svg></button><svg class="cog"><use href="#gear"/></svg></div>
      <div class="pbody">
        <h4>Viewport</h4>
        <dl><dt>Title</dt><dd>Persp...</dd><dt>Width</dt><dd>709</dd><dt>Hei...</dt><dd>374</dd><dt>Proj...</dt><dd class="sel"><span>P...</span><button class="more" aria-label="Projection">⌄</button></dd></dl>
        <h4>Camera</h4>
        <dl><dt>Len...</dt><dd>50.0</dd><dt>Rot...</dt><dd>0.0</dd><dt>X L...</dt><dd>107.9...</dd><dt>Y L...</dt><dd>-191....</dd><dt>Z L...</dt><dd>112.8...</dd><dt>Loc...</dt><dd class="sel"><button>Place...</button></dd></dl>
        <h4>Target</h4>
        <dl><dt>X T...</dt><dd>10.950</dd><dt>Y T...</dt><dd>-23.398</dd><dt>Z T...</dt><dd>0.869</dd><dt>Loc...</dt><dd class="sel"><button>Place...</button></dd></dl>
        <h4>Wallpaper</h4>
        <dl><dt>File...</dt><dd class="sel"><span>(n...</span><button class="more">...</button></dd><dt><label for="ws">Show</label></dt><dd><input id="ws" type="checkbox" checked></dd><dt><label for="wg">Gray</label></dt><dd><input id="wg" type="checkbox" checked></dd></dl>
      </div>
    </aside>
  </div>

  <div class="osnap"><label><input type="checkbox" checked>End</label><label><input type="checkbox" checked>Near</label><label><input type="checkbox" checked>Point</label><label><input type="checkbox" checked>Mid</label><label><input type="checkbox">Cen</label><label><input type="checkbox" checked>Int</label><label><input type="checkbox" checked>Perp</label><label><input type="checkbox">Tan</label><label><input type="checkbox">Quad</label><label><input type="checkbox">Knot</label><label><input type="checkbox">Vertex</label><label><input type="checkbox" disabled>Project</label><label><input type="checkbox" disabled>Disable</label></div>
  <footer class="status"><button class="s1">CPlane</button><span class="s2">x -21.460</span><span class="s2">y -43.711</span><span class="s2">z 0.000</span><span class="s2">Millimeters</span><button class="s3"><i></i>Metal 01</button><button>Grid Snap</button><button class="on">Ortho</button><button>Planar</button><button class="on">Osnap</button><button>SmartTrack</button><button class="on">Gumball</button><button class="s4">Record History</button><button>Filter</button><span class="s5">Minutes from last save: 13</span></footer>
  <div class="mark"><p>Activate Windows</p><small>Go to Settings to activate Windows.</small></div>
</section>
</div>

<footer class="taskbar">
  <button class="start" aria-label="Start"><svg viewBox="0 0 16 16"><path d="M2 3l5-1v6H2zM8 2l6-1v7H8zM2 9h5v5l-5-1zM8 9h6v6l-6-1z" fill="#fff"/></svg></button>
  <div class="search"><svg viewBox="0 0 16 16"><circle cx="9.500" cy="6" r="4.500"/><path d="M6 9l-5 6"/></svg><input type="text" value="Type here to search" aria-label="Search">
    <svg class="capy" viewBox="0 0 48 25"><path d="M0 21q24-6 48 0v4H0z" fill="#728848"/><path d="M8 7q3-4 8-2 6-2 14 0 11 1 11 8l-3 8H19q-4 0-5-5-6 0-6-9z" fill="#8a5c3c"/><path d="M8 8q4-4 8-2l0 7q-8 2-8-5z" fill="#a87850"/><circle cx="11" cy="8" r="1" fill="#221"/><path d="M17 20v3M24 20v3M35 20v3" stroke="#5c3c28" stroke-width="3"/></svg>
  </div>
  <div class="apps">
    <button aria-label="Task view"><svg viewBox="0 0 16 16"><path d="M3 5h7v6H3zM3 2v1h7V2M3 14v-1h7v1M13 2v3M13 7v7" fill="none" stroke="#ddd"/></svg></button>
    <button aria-label="Copilot"><svg viewBox="0 0 16 16"><path d="M5 2h5l2 4h2q2 0 1 3l-2 4q-1 2-3 2H6L4 11H2q-2 0-1-3l2-4q1-2 2-2z" fill="url(#copilot)"/><path d="M7 6h3l-1 5H6z" fill="#3a2838"/></svg></button>
    <button class="run" aria-label="File Explorer"><svg viewBox="0 0 16 16"><path d="M1 2h5l2 2h7v10H1z" fill="#f0b840"/><path d="M1 6h14v8H1z" fill="#fbd868"/><path d="M3 10h10v4h-3v-2H6v2H3z" fill="#3a98dc"/></svg></button>
    <button aria-label="Store"><svg viewBox="0 0 16 16"><path d="M5 4V1h6v3" fill="none" stroke="#eee"/><path d="M1 4h14v9q0 2-2 2H3q-2 0-2-2z" fill="#f4f4f4"/><path d="M5 6h3v3H5z" fill="#e85030"/><path d="M8.500 6h3v3h-3z" fill="#70b030"/><path d="M5 9.500h3v3H5z" fill="#30a0e0"/><path d="M8.500 9.500h3v3h-3z" fill="#f0b020"/></svg></button>
    <button aria-label="Mail"><svg viewBox="0 0 16 16"><path d="M1 5l7-4 7 4v9H1z" fill="#1466b0"/><path d="M2 4h12v5H2z" fill="#e8f4fc"/><path d="M1 6l7 4 7-4v8H1z" fill="#38a8f0"/></svg></button>
    <button aria-label="Brave"><svg viewBox="0 0 16 16"><path d="M4 1h8l3 3-2 8-5 4-5-4-2-8z" fill="#f04a24"/><path d="M4 4l4 1 4-1-1 5-3 3-3-3z" fill="#fff"/><path d="M6 6h4l-2 4z" fill="#f04a24"/></svg></button>
    <button class="run" aria-label="Browser"><svg viewBox="0 0 16 16"><circle cx="8" cy="8" r="7.500" fill="#1c5ca8"/><circle cx="8" cy="8" r="4" fill="none" stroke="#e4f0ff" stroke-width="2"/><path d="M2 5q4-5 9-3M14 11q-4 5-9 3" stroke="#b8d8f8" fill="none"/></svg></button>
    <button class="run" aria-label="Matrix"><svg><use href="#mglyph"/></svg></button>
  </div>
  <div class="tray">
    <button class="weather"><svg viewBox="0 0 16 16"><circle cx="9" cy="8" r="6" fill="#f6a21c"/><path d="M2 5h12M1 8h8M3 12h10" stroke="#f4d890" stroke-width="1.500"/></svg>29°C&ensp;Haze</button>
    <svg viewBox="0 0 16 16"><path d="M3 10l5-5 5 5"/></svg>
    <svg viewBox="0 0 16 16"><path d="M3 5h7v6H3zM10 7l3-1v4l-3-1M5 2h4M5 14h4"/></svg>
    <svg viewBox="0 0 16 16"><path d="M2 3h12v9H2zM5 6h4M6 14h5M9 8l5-5"/><circle cx="12" cy="12" r="2.500" fill="#2c80e0" stroke="none"/></svg>
    <svg viewBox="0 0 16 16"><circle cx="8" cy="8" r="6"/><path d="M2 8h12M8 2v12M4 4q4 3 8 0M4 12q4-3 8 0"/><path d="M9 9h6v5H9z" fill="#888"/></svg>
    <svg viewBox="0 0 16 16"><path d="M2 6h2l3-3v10l-3-3H2zM10 5q2 3 0 6M13 3q3 5 0 10"/></svg>
    <span>ENG</span>
    <time>19:03<br>22-10-2024</time>
    <button class="note" aria-label="Notifications"><svg viewBox="0 0 16 16"><path d="M1 2h13v9H5l-3 3v-3H1z" fill="#fff"/><path d="M4 5h7M4 8h7" stroke="#433"/><circle cx="12" cy="12" r="4" fill="#332a2e" stroke="#aaa"/></svg><b>1</b></button>
  </div>
</footer>
</body>
</html>
```
FILE: styles.css
```css
* { box-sizing: border-box; }
html, body { height: 100%; }
body { margin: 0; display: flex; flex-direction: column; overflow: hidden; background: #d9dee0; color: #222; font: 7px/10px "Liberation Sans", Arial, sans-serif; }
button, input, select { font: inherit; color: inherit; margin: 0; padding: 0; border: 0; background: none; border-radius: 0; min-width: 0; }
h2, h3, h4, p, dl, dd, dt, figure { margin: 0; font-size: inherit; font-weight: inherit; }
svg { display: block; }
.defs { position: absolute; width: 0; height: 0; }

.app-title { display: flex; align-items: center; height: 14px; padding-left: 1px; background: #fff; color: #888; gap: 4px; flex: none; font-size: 7px; }
.app-logo { width: 11px; height: 11px; }
.win-buttons { margin-left: auto; display: flex; gap: 18px; padding-right: 9px; }
.win-buttons svg { width: 10px; height: 10px; fill: none; stroke: #888; }
.menu { display: flex; gap: 6px; height: 13px; padding-left: 6px; background: #f1f1f1; flex: none; }
.menu button { font-size: 7px; color: #111; }

.main { flex: 1; display: flex; min-height: 0; }

/* Left tool panel */
.side { width: 188px; flex: none; background: #383838; color: #ddd; font-family: "DejaVu Sans", Verdana, sans-serif; border-right: 2px solid #181818; position: relative; overflow: hidden; }
.bar { height: 10px; margin-bottom: 1px; padding-left: 2px; display: flex; justify-content: space-between; background: linear-gradient(90deg, #a9a9a6, #c4c2bc); color: #111; font-weight: bold; font-size: 7px; line-height: 10px; }
.bar button { width: 8px; height: 8px; line-height: 7px; color: #c33; background: #c9bcb8; margin: 1px 2px; }
.bar.cut { height: 7px; line-height: 6px; }
.bar.cut button { height: 6px; margin: 0 2px; line-height: 5px; }
.row { display: flex; align-items: center; }
.row svg { width: 14px; height: 14px; fill: none; stroke: #d0d0d0; }
.row button.on { background: #6c94e4; }
.disp { height: 16px; padding-left: 2px; padding-right: 13px; justify-content: space-between; background: #2c2c2c; }
.disp button { width: 14px; height: 14px; }
.combos { height: 11px; padding-right: 14px; gap: 2px; }
.combos select { flex: 1; height: 10px; padding-left: 1px; background: linear-gradient(#777, #777) calc(100% - 4px) 4px / 4px 1px no-repeat #222; color: #8a8a8a; border: 1px solid #444; font-size: 6px; appearance: none; }
.combos select:last-child { flex: 0 0 76px; }
.tall { position: absolute; right: 0; top: 9px; width: 10px; height: 26px; background: #6c94e4; color: #112; }
.tiles { height: 17px; background: #555; gap: 1px; padding: 0 2px; justify-content: space-between; }
.tiles > button { border: 1px solid #8c8c8c; width: 15px; height: 15px; background: #484848; display: flex; align-items: center; justify-content: center; }
.tiles svg { width: 13px; height: 13px; }
.tiles > button.wide { width: 31px; color: #123; margin-left: 5px; }
.tiles.second { height: 18px; margin: 2px 0 1px; }
.steps { display: flex; border: 1px solid #777; margin-left: 4px; }
.steps button { width: 17px; height: 9px; font-size: 6px; line-height: 9px; color: #bbb; background: #3c3c3c; border-right: 1px solid #777; }
.steps button.sel { background: #6688c8; }
.icons { height: 17px; padding: 0 2px; justify-content: space-between; }
.icons.last { height: 18px; }
.icons svg { width: 15px; height: 15px; }
.icons .sep { width: 6px; }
.icons .frame { outline: 1px solid #999; }

.layers { display: grid; grid-template-columns: 88px 88px; column-gap: 7px; row-gap: 3px; padding: 1px 2px 0; font-size: 7px; }
.layer { display: grid; grid-template-columns: 33px 9px 14px 10px 18px; height: 10px; align-items: stretch; line-height: 9px; white-space: nowrap; }
.group { border-right: 3px solid #6c94e4; }
.group .layer { border-bottom: 1px solid #4a4a4a; }
.cur { background: #6c94e4; }
.ar { background: #555; border: 1px solid #333; display: flex; align-items: center; justify-content: center; }
.ar::before { content: ""; border: 2px solid transparent; border-left: 3px solid #fff; border-right: 0; }
.layer svg { width: 10px; height: 9px; background: #505050; }
.sw { border: 1px solid #333; border-width: 0 1px; }
.tg { background: #6c94e4; border: 1px solid #345; border-width: 0 1px; color: #112; font-weight: bold; line-height: 7px; }
.tg.off { background: #444; color: #888; }
.white { background: #fff; } .m1 { background: #0a8358; } .m2 { background: #38b064; } .m3 { background: #78e868; } .m4 { background: #b4f8a8; }
.u1 { background: #f00; } .u2 { background: #0f0; } .u3 { background: #00f; } .u4 { background: #807878; }
.g1 { background: #043c98; } .g2 { background: #3c74c4; } .g3 { background: #68a4f0; } .g4 { background: #a0c8fc; }
.h1 { background: #781ca8; } .h2 { background: #b03c44; } .h3 { background: #f87808; } .h4 { background: #f8b018; }
.vis { display: flex; gap: 6px; padding-left: 5px; }
.vis button { display: flex; align-items: center; justify-content: center; flex: 1; height: 9px; border: 1px solid #777; color: #bbb; font-size: 6px; background: #444; }
.vis svg { width: 12px; height: 8px; }
.pull { display: flex; align-items: center; height: 13px; padding: 0 22px; }
.pull::before, .pull::after { content: ""; flex: 1; height: 1px; background: #555; }
.pull button { width: 7px; height: 7px; border-radius: 50%; background: #bbb; color: #222; line-height: 6px; }
.projects { display: grid; grid-template-columns: 60px 1fr; grid-template-rows: 60px 12px; gap: 1px; background: #484848; }
.plist { background: #505054; border: 1px solid #333; display: flex; align-items: flex-start; font-size: 6px; }
.pick { flex: 1; height: 9px; background: #4870b8; padding-left: 2px; line-height: 9px; }
.vslide { width: 5px; height: 56px; border-left: 1px solid #888; border-top: 7px solid #777; }
.thumbs { display: flex; gap: 2px; overflow: hidden; }
.thumbs figure { flex: 0 0 48px; background: #000; border: 1px solid #666; display: flex; flex-direction: column; }
.thumbs .half { flex-basis: 25px; }
.thumbs .empty { background: #404040; }
.thumbs svg { flex: 1; min-height: 0; margin: 0 auto; height: 38px; }
figcaption { display: flex; height: 8px; padding-left: 2px; line-height: 8px; font-size: 7px; color: #fff; }
figcaption .ar { margin-left: auto; width: 9px; }
.acts { display: flex; height: 10px; background: #333; }
.acts button { flex: 1; border: 1px solid #777; font-size: 6px; line-height: 7px; color: #fff; font-weight: bold; }
.empty .acts button { color: #777; }
.pbtns { display: flex; gap: 1px; padding: 1px; }
.pbtns button { width: 15px; border: 1px solid #777; background: #333; color: #fff; font-weight: bold; line-height: 7px; font-size: 6px; }
.pbtns .grow { flex: 1; }
.hslide { display: flex; align-items: center; }
.hslide i { flex: 1; height: 1px; background: #888; }
.hslide b { width: 6px; height: 6px; background: #888; margin-right: 3px; }
.hslide button { border: 1px solid #777; width: 9px; line-height: 8px; }

/* Rhino window */
.rhino { flex: 1; min-width: 0; position: relative; display: flex; flex-direction: column; padding: 3px 6px 4px 5px; background: #b3d0ea; }
.r-title { height: 19px; flex: none; display: flex; align-items: center; gap: 4px; margin: 0 -6px 0 -5px; padding: 0 6px; background: linear-gradient(#9dbadb, #bccfec); font-size: 7px; }
.r-title > svg { width: 11px; height: 11px; }
.r-win { margin-left: auto; display: flex; gap: 1px; }
.r-win button { width: 20px; height: 11px; border: 1px solid #8496b8; background: linear-gradient(#cddaf0, #a9bcdc); display: flex; align-items: center; justify-content: center; border-radius: 1px; line-height: 9px; }
.r-win i { width: 7px; height: 3px; border: 1px solid #567; background: #fff; }
.r-win .sq { height: 5px; width: 6px; }
.r-win .x { background: linear-gradient(#e09088, #c03020); color: #fff; font-weight: bold; font-size: 9px; }
.cmd { background: #84b48e; font-size: 8px; flex: none; padding-left: 1px; }
.hist { height: 19px; display: flex; justify-content: space-between; border-bottom: 1px solid #5e7a66; }
.prompt { height: 12px; display: flex; align-items: center; }
.prompt label { font-weight: bold; padding-right: 3px; }
.prompt input { flex: 1; border-left: 1px solid #666; height: 10px; }
.ud { width: 10px; background: #f0f0f0; display: flex; flex-direction: column; }
.ud button { flex: 1; line-height: 6px; font-size: 7px; overflow: hidden; }
.tabs { height: 14px; padding: 3px 1px 0 0; flex: none; display: flex; background: #dce0e2; border-top: 2px solid #eef4f0; border-bottom: 1px solid #76867c; }
.tabs button, .vtabs button { border-top: 1px solid #556; border-right: 1px solid #556; background: #dfe4e8; border-radius: 2px 4px 0 0; padding: 0 5px; line-height: 8px; }
.tabs button.act, .vtabs button.act { background: #84b48e; }
.tabs .cog { margin-left: auto; margin-top: -1px; width: 9px; height: 9px; }
.toolbar { flex: none; height: 20px; background: linear-gradient(#a9c4b1, #d9dee0); padding-top: 2px; }
.tools { display: flex; justify-content: space-between; max-width: 684px; }
.tools button, .palette button { width: 16px; height: 16px; display: flex; align-items: center; justify-content: center; position: relative; }
.tools svg, .palette svg { width: 16px; height: 16px; flex: none; fill: none; stroke: #333; }
.dd::after { content: ""; position: absolute; right: -1px; bottom: 0; border: 2px solid transparent; border-right-color: #444; border-bottom-color: #444; }
.work { flex: 1; min-height: 0; display: flex; background: #d9dee0; }
.palette { width: 49px; flex: none; display: grid; grid-template-columns: 16px 16px; column-gap: 2px; padding: 6px 0 0 1px; align-content: space-between; height: 322px; }
.palette svg { width: 15px; height: 15px; }
.center { flex: 1; min-width: 0; display: flex; flex-direction: column; padding-top: 4px; }
.vtabs { height: 13px; flex: none; display: flex; }
.vtabs button { font-size: 7px; line-height: 11px; padding: 0 6px; }
.views { flex: 1; min-height: 0; position: relative; display: grid; grid-template-columns: 442fr 444fr; grid-template-rows: 234fr 238fr; gap: 2px; background: #c0c0c0; }
.view { position: relative; background: #000; min-width: 0; min-height: 0; overflow: hidden; }
.view svg { position: absolute; width: 100%; height: 100%; }
.dim { fill: none; stroke: #167050; stroke-width: 1; }
.dimt { fill: #1a9068; font-weight: bold; }
.bead { fill: none; stroke-linecap: round; }
.vlabel { position: absolute; left: 0; top: 0; height: 11px; display: flex; background: #a8aeb4; color: #556; padding-left: 5px; font-size: 7px; line-height: 11px; gap: 5px; border: 1px solid #778; border-left: 0; align-items: center; }
.vlabel b { border-left: 1px solid #556; padding: 0 2px; line-height: 9px; color: #222; }
.vlabel.green { background: #78b888; color: #122; }

/* Floating gem and metal dialog */
.dialog { position: absolute; left: 334px; top: 13px; width: 187px; padding-bottom: 5px; background: #323234; color: #e4e4e4; font: 7px/10px "DejaVu Sans", Verdana, sans-serif; border: 1px solid #222; display: flex; flex-direction: column; }
.dialog header { display: flex; height: 15px; background: linear-gradient(90deg, #bcbab2, #a8a69e); color: #111; }
.dialog header svg { width: 15px; height: 15px; }
.dialog h3 { font-weight: bold; line-height: 8px; padding-left: 4px; width: 78px; border-right: 1px solid #999; white-space: nowrap; }
.dialog header button { margin: 2px 2px 0 auto; width: 9px; height: 9px; border: 1px solid #977; color: #c44; line-height: 7px; }
.totals { display: flex; justify-content: space-between; align-items: center; padding: 3px 2px 0 4px; white-space: nowrap; }
.totals output { background: #000; color: #4cc8b0; padding: 0 3px; font-size: 7px; font-family: "Liberation Sans", sans-serif; min-width: 20px; text-align: center; }
.pull.inner { height: 11px; }
.gbtns { display: flex; gap: 14px; padding: 0 0 0 26px; }
.gb { display: flex; align-items: center; justify-content: space-between; height: 11px; border: 1px solid #555; background: #242424; padding-left: 1px; width: 43px; }
.gb.long { width: 78px; }
.gb i, .go { width: 9px; height: 9px; background: #2c9c1c; border: 1px solid #80d060; display: flex; align-items: center; justify-content: center; }
.gb i::before, .go::before { content: ""; border: 2px solid transparent; border-left: 3px solid #fff; border-right: 0; }
.gems { margin: 2px 2px 3px; padding: 4px; height: 42px; background: #434346; display: flex; gap: 1px; align-items: flex-start; }
.gems svg { width: 22px; height: 20px; }
.gems table { border-collapse: collapse; text-align: center; line-height: 9px; }
.gems th { font-weight: normal; }
.gems th, .gems td { border: 1px solid #777; padding: 0; height: 10px; background: #262626; }
.gems th:first-child { width: 75px; }
.gems td:nth-child(2) { width: 22px; }
.gems td:nth-child(3) { width: 31px; }
.gems .nb { width: 10px; border-width: 0; border-style: none; background: #434346; }
.lib { display: flex; height: 20px; align-items: center; padding: 0 4px 0 6px; gap: 2px; font: 6px/8px "Liberation Sans", sans-serif; color: #b4b4b4; }
.lib span { margin-right: auto; }
.lib button { display: flex; height: 10px; border: 1px solid #888; padding-left: 2px; gap: 5px; align-items: center; }
.lib i { background: #40b0b0; color: #111; width: 8px; text-align: center; font-style: normal; }
.metals { margin: 0 3px; display: grid; grid-template-columns: 1fr 10px; background: #f0f0f0; }
.clip { overflow: hidden; }
.metals table { table-layout: fixed; width: 170px; border-collapse: collapse; font-size: 6px; line-height: 8px; }
.c1 { width: 81px; } .c2 { width: 35px; } .c3 { width: 32px; } .c4 { width: 22px; }
.metals th { background: #fff; color: #222; height: 14px; text-align: left; font-weight: normal; padding: 0 0 0 4px; }
.metals td { background: #1c1c18; color: #f0f0f0; height: 10px; padding: 0 0 0 3px; border: 1px solid #b4b4ac; border-left: 0; white-space: nowrap; }
.vs { display: flex; flex-direction: column; align-items: center; padding: 3px 0; }
.vs i { width: 9px; height: 38px; background: #cdcdcd; margin: 4px 0 auto; }
.metals b { width: 4px; height: 4px; border-top: 1px solid #222; border-left: 1px solid #222; transform: rotate(45deg); }
.metals b.dn { transform: rotate(225deg); } .metals b.lt { transform: rotate(-45deg); } .metals b.rt { transform: rotate(135deg); }
.hs { grid-column: 1 / 3; height: 9px; display: flex; align-items: center; gap: 4px; padding: 0 14px 0 4px; }
.hs i { flex: 1; height: 9px; background: #cdcdcd; }
.uom { align-self: flex-end; display: flex; justify-content: space-between; width: 81px; height: 11px; margin: 5px 10px 0 0; border: 1px solid #777; color: #b0b0b0; font: 7px/8px "Liberation Sans", sans-serif; padding-left: 1px; }
.uom i { background: #666; width: 8px; font-style: normal; }
.dialog p { margin: 8px 8px 10px; text-align: center; color: #f0d818; font: bold 7px/8px "Liberation Sans", sans-serif; }
.calc { align-self: center; width: 63px; font: 6px/8px "Liberation Sans", sans-serif; border-color: #888; color: #bbb; }

/* Properties panel */
.props { width: 60px; flex: none; margin-left: 4px; padding-top: 4px; display: flex; flex-direction: column; }
.ptabs { display: flex; height: 13px; align-items: center; }
.ptabs button { width: 12px; height: 13px; border: 1px solid #889; border-bottom: 0; border-radius: 2px 2px 0 0; display: flex; align-items: center; }
.ptabs button svg { width: 10px; height: 10px; flex: none; }
.ptabs .act { background: #fff; }
.ptabs .cog { width: 9px; height: 9px; margin-left: auto; }
.pbody { flex: 1; background: #fcfcff; border: 1px solid #778; padding: 7px 2px 0 4px; }
.pbody h4 { height: 12px; line-height: 12px; }
.pbody dl { display: grid; grid-template-columns: 26px 1fr; grid-auto-rows: 12px; margin-bottom: 1px; line-height: 12px; border-top: 1px solid #ddd; }
.pbody dt { padding-left: 5px; }
.pbody dt, .pbody dd { border-bottom: 1px solid #ddd; border-right: 1px solid #ddd; white-space: nowrap; }
.pbody dd { padding-left: 1px; }
.pbody .sel { display: flex; justify-content: space-between; }
.pbody dd button { flex: 1; background: #dcdcdc; border: 1px solid #bbb; line-height: 9px; }
.pbody dd .more { flex: 0 0 11px; }
input[type="checkbox"] { appearance: none; width: 8px; height: 8px; border: 1px solid #444; background: #fff; position: relative; }
input[type="checkbox"]:checked::after { content: ""; position: absolute; left: 2px; top: 0; width: 2px; height: 4px; border: solid #222; border-width: 0 1px 1px 0; transform: rotate(45deg); }
input[type="checkbox"]:disabled { border-color: #bbb; background: #e0e4e4; }
.pbody input { margin: 1px 0 0 1px; display: block; }

.osnap { height: 27px; flex: none; padding: 0 0 3px 2px; background: #d9dee0; display: flex; align-items: center; gap: 5px; }
.osnap label { display: flex; align-items: center; gap: 2px; }
.status { height: 14px; flex: none; display: flex; background: #d9dee0; border-top: 1px solid #778; font-size: 8px; }
.status > * { border-right: 1px solid #667; line-height: 13px; text-align: center; white-space: nowrap; padding: 0 5px; }
.status .on { background: #f0f4f8; font-weight: bold; padding: 0 3px; }
.status .s1 { width: 35px; padding: 0; }
.status .s2 { width: 55px; padding: 0; }
.status .s3 { width: 108px; display: flex; align-items: center; gap: 1px; padding: 0 2px; }
.s3 i { width: 9px; height: 9px; background: #0a7850; border: 1px solid #222; }
.status .s4 { width: 67px; }
.status .s5 { flex: 1; text-align: left; padding: 0 2px; }
.mark { position: absolute; right: 52px; bottom: 32px; width: 148px; font: 12px/15px "Open Sans", sans-serif; color: #8a8a8a; }
.mark small { display: block; font-size: 8px; line-height: 12px; color: #bcc2c4; white-space: nowrap; }

/* Windows taskbar */
.taskbar { height: 25px; flex: none; display: flex; align-items: center; background: linear-gradient(90deg, #38303a, #48282a 30%, #4a2a26 60%, #35222c 80%, #2c2230); color: #eee; font-size: 8px; }
.start { width: 30px; display: flex; justify-content: center; }
.start svg { width: 12px; height: 12px; }
.search { width: 180px; height: 25px; flex: none; display: flex; align-items: center; background: #f2f2f2; color: #444; padding-left: 8px; }
.search > svg:first-child { width: 10px; height: 11px; fill: none; stroke: #222; }
.search input { flex: 1; padding-left: 7px; font: 9px/12px "Open Sans", sans-serif; }
.search .capy { width: 48px; height: 25px; }
.apps { display: flex; height: 25px; }
.apps button { width: 31px; height: 25px; display: flex; align-items: center; justify-content: center; border-bottom: 2px solid transparent; }
.apps svg { width: 16px; height: 16px; }
.apps button:first-child svg { width: 12px; height: 12px; }
.apps .run { border-bottom-color: #76b9ed; }
.tray { margin-left: auto; display: flex; align-items: center; gap: 4px; padding-right: 12px; white-space: nowrap; }
.tray > svg { width: 11px; height: 11px; fill: none; stroke: #eee; }
.weather { display: flex; align-items: center; gap: 4px; margin-right: 10px; font-size: 8px; }
.weather svg { width: 16px; height: 16px; }
.tray span { font-size: 7px; }
.tray time { text-align: center; font-size: 7px; line-height: 11px; margin: 0 8px 0 4px; }
.note { position: relative; }
.note svg { width: 16px; height: 16px; }
.note b { position: absolute; right: 2px; bottom: -1px; font-size: 6px; font-weight: normal; }
```
